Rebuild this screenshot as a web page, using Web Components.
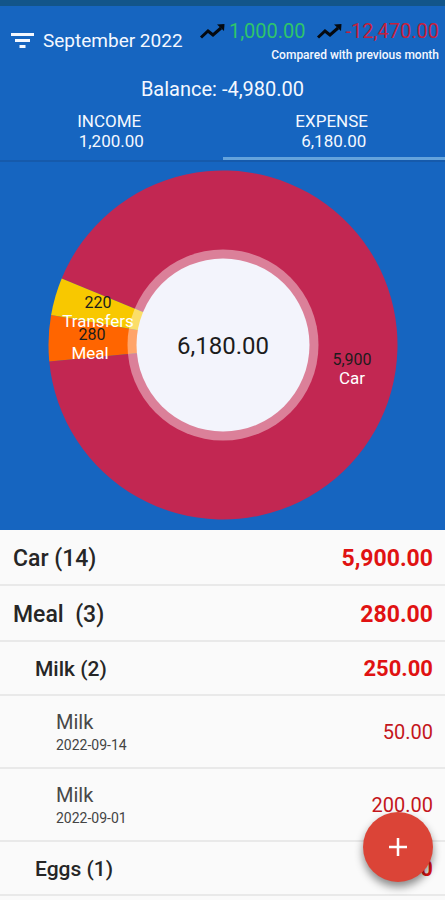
<!DOCTYPE html>
<html lang="en">
<head>
<meta charset="utf-8">
<meta name="viewport" content="width=device-width, initial-scale=1">
<title>Monthly expenses</title>
<style>
  body { margin: 0; background: #fafafa; font-family: Roboto, "Noto Sans", sans-serif; }
</style>
</head>
<body>
<budget-app></budget-app>

<script>
const define = (name, html, setup) => customElements.define(name, class extends HTMLElement {
  constructor() {
    super();
    this.attachShadow({ mode: 'open' }).innerHTML = html;
  }
  connectedCallback() { if (setup) setup(this, this.shadowRoot); }
});

define('trend-value', `
  <style>
    :host { display: flex; align-items: center; gap: 4px; font-size: 20px; line-height: 24px; }
    svg { display: block; width: 26px; height: 24px; }
  </style>
  <svg viewBox="0 0 26 24" aria-hidden="true">
    <path d="M2 18.500 9 12l5 4 8-7" fill="none" stroke="#05090f" stroke-width="3"/>
    <path d="M18 5.500 25.500 5 25 12z" fill="#05090f"/>
  </svg>
  <span><slot></slot></span>
`);

define('summary-header', `
  <style>
    :host { display: block; color: #f4f8ff; }
    .bar { display: flex; justify-content: space-between; padding: 13px 6px 0 10px; }
    button { border: 0; background: none; color: inherit; font: inherit; padding: 0; cursor: pointer; }
    .month { display: flex; align-items: center; gap: 9px; height: 44px; font-size: 19px; line-height: 24px; }
    .month svg { display: block; width: 24px; height: 18px; }
    .trends { display: flex; gap: 10px; }
    .up { color: #2fc46b; }
    .down { color: #c5203c; }
    .note { margin: 0; text-align: right; font-size: 12px; line-height: 24px; font-weight: 500; }
    .balance { margin: 10px 0 0; text-align: center; font-size: 20px; line-height: 24px; }
  </style>
  <div class="bar">
    <button class="month" type="button" aria-label="Filter: September 2022">
      <svg viewBox="0 0 24 18" aria-hidden="true" fill="currentColor">
        <path d="M1 1h23v3H1zM5 7h15v3H5zM9.500 13h6v3h-6z"/>
      </svg>
      <span>September 2022</span>
    </button>
    <div>
      <div class="trends">
        <trend-value class="up">1,000.00</trend-value>
        <trend-value class="down">-12,470.00</trend-value>
      </div>
      <p class="note">Compared with previous month</p>
    </div>
  </div>
  <p class="balance">Balance: -4,980.00</p>
`);

define('type-tabs', `
  <style>
    :host { display: grid; grid-template-columns: 1fr 1fr; padding-top: 10px; border-bottom: 2px solid #165aab; }
    button {
      border: 0; border-bottom: 3px solid transparent; background: none; cursor: pointer;
      color: #f4f8ff; font: inherit; font-size: 17px; line-height: 20px; padding: 0 0 6px;
    }
    button[aria-selected="true"] { border-bottom-color: #64a3dc; }
    span { display: block; }
  </style>
  <button type="button" role="tab" aria-selected="false"><span>INCOME&nbsp;</span><span>1,200.00</span></button>
  <button type="button" role="tab" aria-selected="true"><span>EXPENSE&nbsp;</span><span>6,180.00</span></button>
`, el => el.setAttribute('role', 'tablist'));

/* Slices start at the left edge of the ring; angles are degrees clockwise from there. */
const slices = [
  { color: '#c22752', from: 22.4, to: 354.6 },
  { color: '#ff6500', from: -5.4, to: 9.9 },
  { color: '#f8c800', from: 9.9, to: 22.4 },
];
const wedge = ({ color, from, to }) => {
  const at = d => {
    const a = (180 + d) * Math.PI / 180;
    return `${(175 + 174.5 * Math.cos(a)).toFixed(2)} ${(175 + 174.5 * Math.sin(a)).toFixed(2)}`;
  };
  return `<path fill="${color}" d="M175 175L${at(from)}A174.5 174.5 0 ${to - from > 180 ? 1 : 0} 1 ${at(to)}Z"/>`;
};

define('expense-chart', `
  <style>
    :host { display: flex; justify-content: center; padding: 8px 0 10px; }
    svg { display: block; width: 100%; max-width: 350px; height: auto; }
    text { font-size: 17px; text-anchor: middle; fill: #fff; }
    .value { font-size: 16px; fill: #1c1c1c; }
    .total { font-size: 24px; fill: #1c1c1c; }
  </style>
  <svg viewBox="0 0 350 350" role="img" aria-label="Expenses by category">
    ${slices.map(wedge).join('')}
    <circle cx="175" cy="175" r="95.500" fill="#fff" fill-opacity=".41"/>
    <circle cx="175" cy="175" r="86.500" fill="#f3f4fc"/>
    <text class="value" x="50" y="138">220</text>
    <text x="50" y="157">Transfers</text>
    <text class="value" x="44" y="170">280</text>
    <text x="42" y="189">Meal</text>
    <text class="value" x="304" y="195">5,900</text>
    <text x="304" y="214">Car</text>
    <text class="total" x="175" y="184">6,180.00</text>
  </svg>
`);

define('entry-row', `
  <style>
    :host {
      display: flex; align-items: center; justify-content: space-between;
      min-height: 50px; padding: 4px 12px 0 13px; border-bottom: 2px solid #e9e9e9;
      color: #262626; font-size: 23px; line-height: 26px; font-weight: 500;
    }
    :host([level="1"]) { padding: 2px 12px 0 35px; min-height: 50px; font-size: 21px; }
    :host([level="2"]) { padding: 0 12px 0 56px; min-height: 71px; font-size: 20px; font-weight: 400; color: #484848; }
    .name { white-space: pre; }
    small { display: block; font-size: 14px; line-height: 20px; color: #444; }
    small:empty { display: none; }
    .amount { color: #e01212; font-weight: 700; }
    :host([level="1"]) .amount { font-size: 22px; }
    :host([level="2"]) .amount { color: #c4161c; font-weight: 400; }
  </style>
  <div><span class="name"><slot></slot></span><small></small></div>
  <span class="amount"></span>
`, (el, root) => {
  root.querySelector('small').textContent = el.getAttribute('date') || '';
  root.querySelector('.amount').textContent = el.getAttribute('amount');
});

define('add-button', `
  <style>
    :host { position: fixed; right: 12px; bottom: 18px; }
    button {
      display: grid; place-items: center; width: 70px; height: 70px; padding: 0; border: 0;
      border-radius: 50%; background: #db4437; cursor: pointer; box-shadow: 0 5px 9px rgba(0,0,0,.45);
    }
    svg { width: 20px; height: 20px; }
  </style>
  <button type="button" aria-label="Add entry">
    <svg viewBox="0 0 20 20" aria-hidden="true"><path d="M10 1v18M1 10h18" stroke="#fff" stroke-width="2.500"/></svg>
  </button>
`);

define('budget-app', `
  <style>
    :host { display: block; }
    header { background: #1665c0; border-top: 6px solid #12558a; }
  </style>
  <header>
    <summary-header></summary-header>
    <type-tabs></type-tabs>
    <expense-chart></expense-chart>
  </header>
  <main>
    <entry-row amount="5,900.00">Car (14)</entry-row>
    <entry-row amount="280.00">Meal  (3)</entry-row>
    <entry-row level="1" amount="250.00">Milk (2)</entry-row>
    <entry-row level="2" date="2022-09-14" amount="50.00">Milk</entry-row>
    <entry-row level="2" date="2022-09-01" amount="200.00">Milk</entry-row>
    <entry-row level="1" amount="30.00">Eggs (1)</entry-row>
  </main>
  <add-button></add-button>
`);
</script>
</body>
</html>
